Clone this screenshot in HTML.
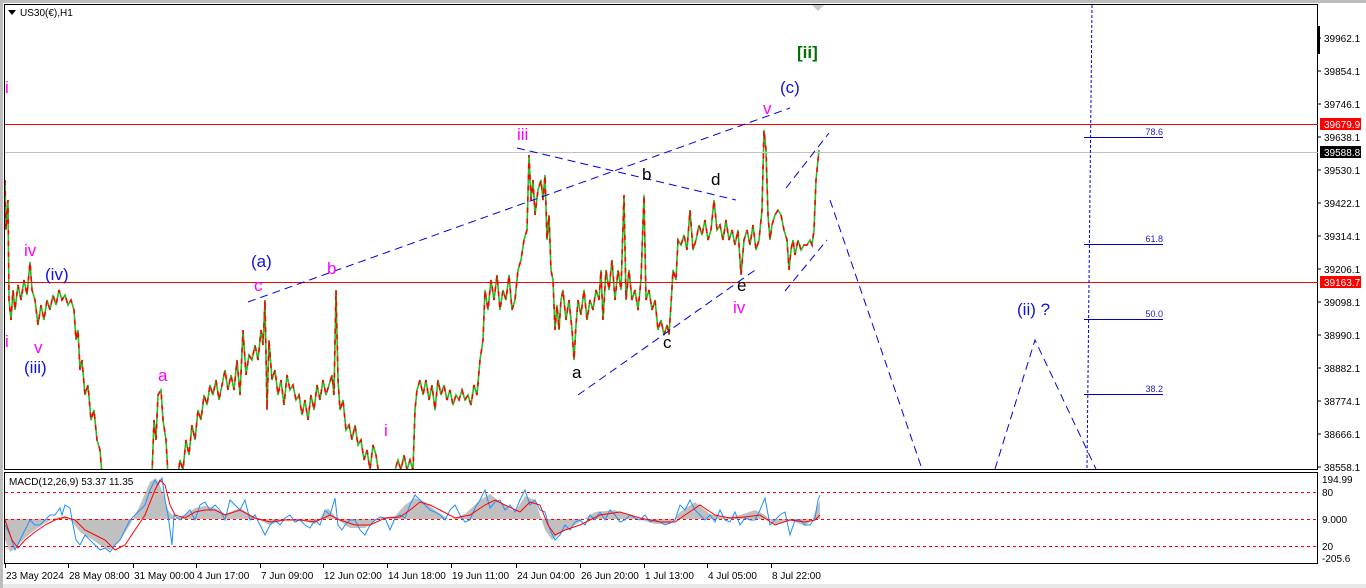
<!DOCTYPE html>
<html><head><meta charset="utf-8"><style>
html,body{margin:0;padding:0;background:#fff;width:1366px;height:588px;overflow:hidden;font-family:"Liberation Sans",sans-serif}
svg{display:block}
</style></head><body>
<svg width="1366" height="588" xmlns="http://www.w3.org/2000/svg" font-family="Liberation Sans, sans-serif">
<rect x="0" y="0" width="1366" height="588" fill="#fff"/>
<rect x="0" y="0" width="1366" height="3" fill="#bdbdbd"/>
<rect x="0" y="584" width="1366" height="4" fill="#e8e8e8"/>
<rect x="0" y="0" width="3" height="588" fill="#bdbdbd"/>
<defs><clipPath id="cp"><rect x="5" y="5" width="1313" height="464"/></clipPath>
<clipPath id="cm"><rect x="5" y="473" width="1313" height="90"/></clipPath></defs>
<rect x="4.5" y="4.5" width="1313" height="465" fill="none" stroke="#000"/>
<rect x="4.5" y="472.5" width="1313" height="91" fill="none" stroke="#000"/>
<g clip-path="url(#cp)" fill="none" stroke-width="1.6" stroke-linejoin="miter">
<polyline stroke="#22c022" points="5,180 6,230 8,200 9,300 11,320 13,290 15,310 18,285 21,300 24,280 27,295 30,262 32,290 35,300 38,325 41,305 44,320 47,300 50,310 53,295 56,305 59,290 62,300 65,295 68,305 71,300 74,310 76,340 78,330 80,370 82,360 85,395 88,385 91,420 94,410 97,440 100,450 102,475 152,475 154,420 156,440 158,395 161,390 163,420 166,440 168,475 178,475 180,460 183,470 186,440 189,455 192,425 195,440 198,410 201,420 204,395 207,405 210,385 213,395 216,380 219,400 222,385 225,370 228,390 231,375 234,390 237,360 240,395 243,330 246,375 249,355 252,360 255,345 258,360 261,330 263,345 265,300 267,410 269,340 272,380 275,370 278,395 281,380 284,405 287,375 290,390 293,385 296,400 299,395 302,415 305,400 308,420 311,395 314,410 317,385 320,400 323,380 326,395 329,385 332,375 334,395 336,290 338,380 340,410 343,400 346,430 349,425 352,440 355,425 358,445 361,440 364,460 367,450 370,470 373,445 376,455 379,475 392,475 395,470 398,460 401,470 404,455 407,470 410,460 413,470 415,410 417,390 420,380 423,395 426,380 429,400 432,385 435,410 438,380 441,395 444,385 447,400 450,390 453,405 456,395 459,400 462,390 465,400 468,395 471,405 474,385 477,395 480,360 483,340 485,290 488,310 491,280 494,300 497,275 500,310 503,290 506,300 509,275 512,310 515,300 518,270 521,260 524,240 527,230 529,155 531,200 533,180 535,215 538,190 541,180 543,200 545,175 547,240 549,215 551,270 553,280 555,330 557,305 559,330 561,300 563,290 566,320 569,300 572,330 574,360 576,325 578,300 581,315 584,290 587,320 590,300 593,310 596,290 599,300 601,270 603,320 606,270 609,290 612,260 615,300 618,270 621,290 624,195 626,300 629,270 632,300 635,290 638,310 641,280 644,195 646,300 649,290 652,310 655,300 658,330 661,320 664,335 667,325 669,335 671,305 673,270 676,280 678,240 681,245 684,235 687,250 690,210 693,250 696,240 699,225 702,235 705,220 708,240 711,230 714,200 717,230 720,225 723,240 726,220 729,240 732,230 735,245 738,230 741,275 744,240 747,230 750,245 753,225 756,250 759,240 762,210 764,130 766,150 768,215 770,240 772,225 775,215 778,210 781,215 784,230 787,240 789,270 791,250 793,240 795,255 798,240 801,250 804,245 807,245 810,240 812,245 814,230 816,180 818,160 819,150"/>
<polyline stroke="#ff0000" stroke-dasharray="5,6" points="5,180 6,230 8,200 9,300 11,320 13,290 15,310 18,285 21,300 24,280 27,295 30,262 32,290 35,300 38,325 41,305 44,320 47,300 50,310 53,295 56,305 59,290 62,300 65,295 68,305 71,300 74,310 76,340 78,330 80,370 82,360 85,395 88,385 91,420 94,410 97,440 100,450 102,475 152,475 154,420 156,440 158,395 161,390 163,420 166,440 168,475 178,475 180,460 183,470 186,440 189,455 192,425 195,440 198,410 201,420 204,395 207,405 210,385 213,395 216,380 219,400 222,385 225,370 228,390 231,375 234,390 237,360 240,395 243,330 246,375 249,355 252,360 255,345 258,360 261,330 263,345 265,300 267,410 269,340 272,380 275,370 278,395 281,380 284,405 287,375 290,390 293,385 296,400 299,395 302,415 305,400 308,420 311,395 314,410 317,385 320,400 323,380 326,395 329,385 332,375 334,395 336,290 338,380 340,410 343,400 346,430 349,425 352,440 355,425 358,445 361,440 364,460 367,450 370,470 373,445 376,455 379,475 392,475 395,470 398,460 401,470 404,455 407,470 410,460 413,470 415,410 417,390 420,380 423,395 426,380 429,400 432,385 435,410 438,380 441,395 444,385 447,400 450,390 453,405 456,395 459,400 462,390 465,400 468,395 471,405 474,385 477,395 480,360 483,340 485,290 488,310 491,280 494,300 497,275 500,310 503,290 506,300 509,275 512,310 515,300 518,270 521,260 524,240 527,230 529,155 531,200 533,180 535,215 538,190 541,180 543,200 545,175 547,240 549,215 551,270 553,280 555,330 557,305 559,330 561,300 563,290 566,320 569,300 572,330 574,360 576,325 578,300 581,315 584,290 587,320 590,300 593,310 596,290 599,300 601,270 603,320 606,270 609,290 612,260 615,300 618,270 621,290 624,195 626,300 629,270 632,300 635,290 638,310 641,280 644,195 646,300 649,290 652,310 655,300 658,330 661,320 664,335 667,325 669,335 671,305 673,270 676,280 678,240 681,245 684,235 687,250 690,210 693,250 696,240 699,225 702,235 705,220 708,240 711,230 714,200 717,230 720,225 723,240 726,220 729,240 732,230 735,245 738,230 741,275 744,240 747,230 750,245 753,225 756,250 759,240 762,210 764,130 766,150 768,215 770,240 772,225 775,215 778,210 781,215 784,230 787,240 789,270 791,250 793,240 795,255 798,240 801,250 804,245 807,245 810,240 812,245 814,230 816,180 818,160 819,150"/>
</g>
<line x1="5" y1="124.5" x2="1318" y2="124.5" stroke="#f00"/>
<line x1="5" y1="282.5" x2="1318" y2="282.5" stroke="#f00"/>
<line x1="5" y1="152.5" x2="1318" y2="152.5" stroke="#c0c0c0"/>
<g clip-path="url(#cp)" stroke="#0000e0" fill="none" stroke-dasharray="8,5">
<line x1="248" y1="302" x2="790" y2="108"/>
<line x1="517" y1="148" x2="736" y2="200"/>
<line x1="578" y1="395" x2="758" y2="268"/>
<line x1="786" y1="188" x2="829" y2="133"/>
<line x1="785" y1="291" x2="827" y2="240"/>
<polyline points="830,200 922,469"/>
<polyline points="995,469 1035,340 1096,469"/>
</g>
<line x1="1092" y1="5" x2="1087" y2="469" stroke="#0000e0" stroke-dasharray="3,2"/>
<g stroke="#0000c0">
<line x1="1084" y1="137.5" x2="1163" y2="137.5"/>
<line x1="1084" y1="244.5" x2="1163" y2="244.5"/>
<line x1="1084" y1="319.5" x2="1163" y2="319.5"/>
<line x1="1084" y1="394.5" x2="1163" y2="394.5"/>
</g>
<g font-size="9" fill="#2020c0" text-anchor="end">
<text x="1163" y="135">78.6</text><text x="1163" y="242">61.8</text><text x="1163" y="317">50.0</text><text x="1163" y="392">38.2</text>
</g>
<polygon points="812,5 824,5 818,11" fill="#c8c8c8"/>
<g font-size="17">
<g fill="#ff00ff">
<text x="5" y="93">i</text><text x="5" y="347">i</text><text x="24" y="256">iv</text><text x="34" y="353">v</text>
<text x="158" y="381">a</text><text x="254" y="291">c</text><text x="327" y="274">b</text><text x="384" y="436">i</text>
<text x="517" y="140">iii</text><text x="733" y="313">iv</text><text x="763" y="114">v</text>
</g>
<g fill="#1010e0">
<text x="45" y="280">(iv)</text><text x="24" y="373">(iii)</text><text x="251" y="267">(a)</text><text x="780" y="93">(c)</text><text x="1017" y="315">(ii) ?</text>
</g>
<g fill="#000">
<text x="642" y="180">b</text><text x="711" y="185">d</text><text x="572" y="378">a</text><text x="663" y="348">c</text><text x="737" y="291">e</text>
</g>
<text x="797" y="58" fill="#007000" font-weight="bold">[ii]</text>
</g>
<polygon points="8,10 16,10 12,15" fill="#000"/>
<text x="20" y="16" font-size="10" fill="#000">US30(€),H1</text>
<g font-size="10" fill="#000">
<g stroke="#000"><line x1="1318" y1="38" x2="1321" y2="38"/><line x1="1318" y1="71" x2="1321" y2="71"/><line x1="1318" y1="104" x2="1321" y2="104"/><line x1="1318" y1="137" x2="1321" y2="137"/><line x1="1318" y1="170" x2="1321" y2="170"/><line x1="1318" y1="203" x2="1321" y2="203"/><line x1="1318" y1="236" x2="1321" y2="236"/><line x1="1318" y1="269" x2="1321" y2="269"/><line x1="1318" y1="302" x2="1321" y2="302"/><line x1="1318" y1="335" x2="1321" y2="335"/><line x1="1318" y1="368" x2="1321" y2="368"/><line x1="1318" y1="401" x2="1321" y2="401"/><line x1="1318" y1="434" x2="1321" y2="434"/><line x1="1318" y1="467" x2="1321" y2="467"/></g>
<rect x="1317" y="26" width="3" height="28" fill="#000"/>
<text x="1324" y="42">39962.1</text><text x="1324" y="75">39854.1</text><text x="1324" y="108">39746.1</text>
<text x="1324" y="141">39638.1</text><text x="1324" y="174">39530.1</text><text x="1324" y="207">39422.1</text><text x="1324" y="240">39314.1</text>
<text x="1324" y="273">39206.1</text><text x="1324" y="306">39098.1</text><text x="1324" y="339">38990.1</text><text x="1324" y="372">38882.1</text>
<text x="1324" y="405">38774.1</text><text x="1324" y="438">38666.1</text><text x="1324" y="471">38558.1</text>
<rect x="1320" y="118" width="41" height="12" fill="#f00"/><text x="1324" y="128" fill="#fff">39679.9</text>
<rect x="1320" y="146" width="41" height="12" fill="#000"/><text x="1324" y="156" fill="#fff">39588.8</text>
<rect x="1320" y="276" width="41" height="12" fill="#f00"/><text x="1324" y="286" fill="#fff">39163.7</text>
<text x="1322" y="483">194.99</text><text x="1322" y="496">80</text><text x="1322" y="523">9.000</text><text x="1322" y="550">20</text><text x="1322" y="562">-205.6</text>
</g>
<g clip-path="url(#cm)">
<polygon fill="#c0c0c0" points="5,519 5,540 10,552 16,548 25,538 35,530 45,523 55,518 65,516 72,522 80,532 90,538 100,545 110,550 120,540 130,525 140,505 150,482 156,478 162,490 168,510 175,518 185,515 195,508 205,506 215,508 225,514 240,508 255,518 270,525 285,520 300,520 315,524 328,508 338,520 350,528 365,528 380,518 395,516 405,505 415,498 425,502 435,510 450,520 465,514 480,500 490,494 500,502 515,512 525,496 535,500 545,530 552,540 562,532 575,525 595,512 615,510 635,518 655,524 670,524 680,512 695,502 710,514 725,518 740,515 755,510 765,515 775,525 790,520 805,526 812,520 818,505 820,500 820,519"/>
<g stroke="#f00" stroke-dasharray="3,3"><line x1="5" y1="492.5" x2="1318" y2="492.5"/><line x1="5" y1="519.5" x2="1318" y2="519.5"/><line x1="5" y1="546.5" x2="1318" y2="546.5"/></g>
<polyline fill="none" stroke="#1e90ff" points="5,525 10,535 15,550 20,540 25,530 30,520 35,525 40,525 45,520 50,515 55,515 60,508 62,515 65,505 70,508 73,525 76,540 80,545 85,535 90,540 95,545 100,550 105,548 110,552 115,545 120,540 125,530 130,520 135,515 140,510 145,505 150,490 155,480 158,485 162,478 165,500 168,515 172,545 174,515 180,520 185,515 190,510 195,520 200,505 205,502 210,510 215,505 220,510 225,520 230,500 235,505 240,510 245,500 250,520 255,515 260,525 265,535 270,525 275,520 280,525 285,518 290,515 295,522 300,520 305,525 310,528 315,520 320,525 325,510 330,515 335,498 338,525 342,530 345,525 350,520 355,520 360,530 365,535 370,525 375,520 380,517 385,518 390,530 395,518 400,515 405,518 410,505 415,495 420,500 425,505 430,510 435,512 440,515 445,520 450,510 455,505 460,515 465,522 470,520 475,508 480,500 485,490 490,508 495,502 500,500 505,510 510,505 515,512 520,500 525,490 530,505 535,500 540,510 545,512 550,530 555,540 560,535 565,525 570,530 575,522 580,520 585,525 590,515 595,520 600,512 605,520 610,510 615,515 620,522 625,520 630,515 635,518 640,520 645,515 650,522 655,520 660,522 665,525 670,523 675,520 680,505 685,510 690,500 695,510 700,515 705,520 710,515 715,522 720,510 725,520 730,522 735,512 740,525 745,518 750,520 755,520 760,510 765,498 770,525 775,520 780,515 785,512 790,535 795,520 800,520 805,525 810,525 815,518 818,500 820,495"/>
<polyline fill="none" stroke="#f00" points="5,520 12,540 18,548 25,540 35,532 45,525 55,520 65,517 75,520 85,530 95,535 105,540 115,550 125,545 135,530 145,515 155,490 160,480 165,485 170,505 175,515 185,518 195,512 205,510 215,510 225,515 240,510 255,518 270,522 285,520 300,520 315,522 330,515 340,520 355,525 370,525 385,518 400,517 410,510 420,502 430,505 440,510 455,518 470,515 485,505 495,500 505,505 520,512 530,502 540,505 548,525 555,535 565,530 580,525 600,515 620,512 640,518 660,522 675,522 685,515 700,505 715,515 730,518 745,517 760,515 775,525 790,520 805,522 815,520 820,515"/>
</g>
<text x="9" y="485" font-size="10" fill="#000">MACD(12,26,9) 53.37 11.35</text>
<g font-size="10" fill="#000">
<g stroke="#000"><line x1="5.5" y1="564" x2="5.5" y2="568"/><line x1="68.5" y1="564" x2="68.5" y2="568"/><line x1="133.5" y1="564" x2="133.5" y2="568"/><line x1="196.5" y1="564" x2="196.5" y2="568"/><line x1="260.5" y1="564" x2="260.5" y2="568"/><line x1="323.5" y1="564" x2="323.5" y2="568"/><line x1="387.5" y1="564" x2="387.5" y2="568"/><line x1="451.5" y1="564" x2="451.5" y2="568"/><line x1="516.5" y1="564" x2="516.5" y2="568"/><line x1="580.5" y1="564" x2="580.5" y2="568"/><line x1="644.5" y1="564" x2="644.5" y2="568"/><line x1="707.5" y1="564" x2="707.5" y2="568"/><line x1="771.5" y1="564" x2="771.5" y2="568"/></g>
<text x="6" y="579">23 May 2024</text><text x="69" y="579">28 May 08:00</text><text x="134" y="579">31 May 00:00</text><text x="197" y="579">4 Jun 17:00</text><text x="261" y="579">7 Jun 09:00</text><text x="324" y="579">12 Jun 02:00</text><text x="388" y="579">14 Jun 18:00</text><text x="452" y="579">19 Jun 11:00</text><text x="517" y="579">24 Jun 04:00</text><text x="581" y="579">26 Jun 20:00</text><text x="645" y="579">1 Jul 13:00</text><text x="708" y="579">4 Jul 05:00</text><text x="772" y="579">8 Jul 22:00</text>
</g>
</svg>
</body></html>
